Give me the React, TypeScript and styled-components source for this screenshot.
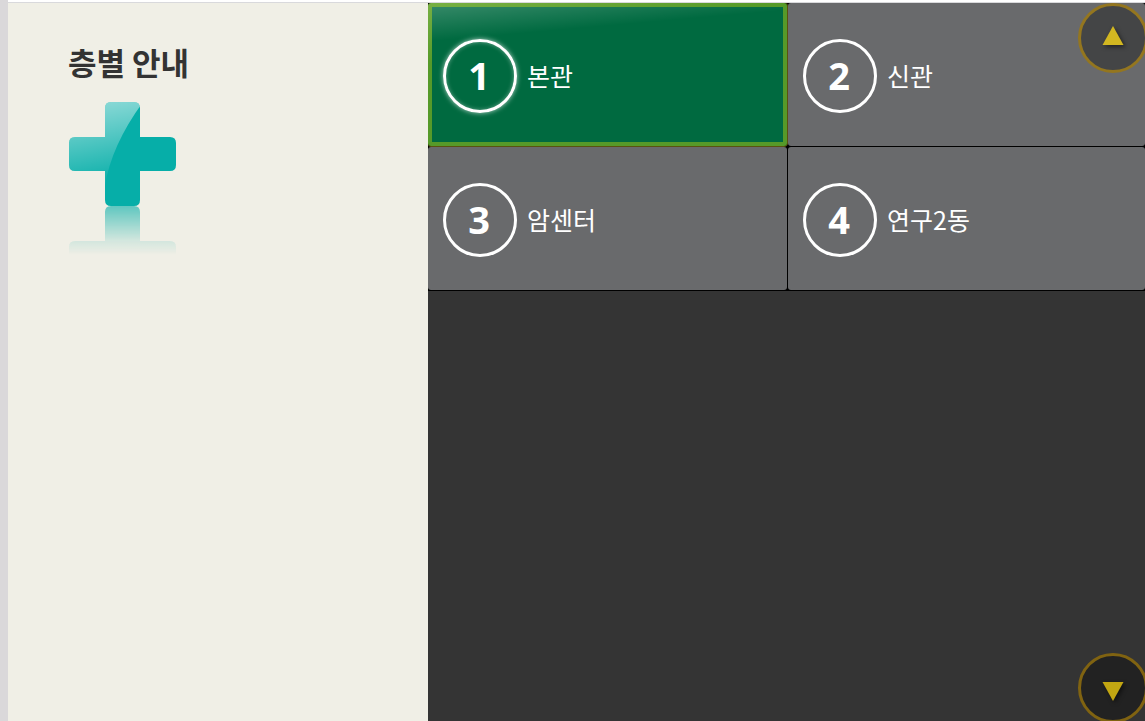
import React, { useState } from "react";
import styled, { createGlobalStyle, css } from "styled-components";

const GlobalStyle = createGlobalStyle`
  * { box-sizing: border-box; }
  body {
    margin: 0;
    overflow: hidden;
    font-family: "Noto Sans", "Noto Sans CJK KR", sans-serif;
  }
`;

const Page = styled.div`
  min-height: 100vh;
  display: flex;
  flex-direction: column;
  border-left: 8px solid #dad8da;
  background: #fff;
`;

const TopRule = styled.div`
  height: 3px;
  border-bottom: 1px solid #d9d9dc;
`;

const Columns = styled.div`
  flex: 1;
  display: flex;
`;

const Side = styled.aside`
  flex: 0 0 420px;
  padding: 35px 60px;
  background: #f0efe6;
`;

const Title = styled.h1`
  margin: 0 0 16px;
  font: bold 31px/48px "Noto Sans CJK KR", sans-serif;
  color: #333;
`;

const Cross = styled.svg`
  display: block;
  width: 109px;
  height: 156px;
`;

const Main = styled.main`
  position: relative;
  flex: 1;
  min-width: 0;
  overflow: hidden;
  background: #343434;
`;

const Grid = styled.div`
  display: grid;
  grid-template-columns: minmax(359px, 1fr) minmax(357px, 1fr);
  grid-auto-rows: 143px;
  gap: 1px;
  padding-bottom: 1px;
  background: #000;
`;

const Circle = styled.span<{ $active: boolean }>`
  flex: none;
  width: 74px;
  height: 74px;
  display: flex;
  align-items: center;
  justify-content: center;
  padding: 0 2px 2px 0;
  border: 3px solid #fff;
  border-radius: 50%;
  font-size: 38px;
  line-height: 54px;
  font-weight: bold;
  ${(p) => p.$active && css`box-shadow: 0 0 5px rgba(255, 255, 255, 0.7), inset 0 0 4px rgba(255, 255, 255, 0.4);`}
`;

const Label = styled.span`
  padding-bottom: 2px;
  font: 25px/36px "Noto Sans CJK KR", sans-serif;
`;

const Tile = styled.button<{ $active: boolean }>`
  display: flex;
  align-items: center;
  gap: 10px;
  padding: 3px 15px 0;
  border: 0;
  border-radius: 3px;
  background: #696a6c;
  color: #fff;
  font-family: inherit;
  text-align: left;
  cursor: pointer;
  ${(p) =>
    p.$active &&
    css`
      padding: 3px 11px 0;
      border: 4px solid transparent;
      background:
        linear-gradient(175deg, rgba(255, 255, 255, 0.2) 0, rgba(255, 255, 255, 0) 34px) padding-box,
        linear-gradient(#006a40, #006a40) padding-box,
        linear-gradient(170deg, #78b043 0, #569a29 60px) border-box;
      box-shadow: 0 1px 0 #5a5210, 1px 0 0 #5a5210;
    `}
`;

const Scroll = styled.button<{ $end: "top" | "bottom" }>`
  position: absolute;
  right: -3px;
  ${(p) => (p.$end === "top" ? "top: 0;" : "bottom: -2px;")}
  width: 70px;
  height: 70px;
  display: flex;
  align-items: center;
  justify-content: center;
  padding: 0;
  border: 3px solid ${(p) => (p.$end === "top" ? "#94761f" : "#806311")};
  border-radius: 50%;
  background: ${(p) => (p.$end === "top" ? "#444546" : "#222")};
  color: ${(p) => (p.$end === "top" ? "#d2b721" : "#c2a612")};
  cursor: pointer;

  svg {
    display: block;
    overflow: visible;
    filter: drop-shadow(2px 2px 2px rgba(0, 0, 0, 0.5));
  }
`;

const buildings = ["본관", "신관", "암센터", "연구2동"];

const crossPath =
  "M42 0H65Q71 0 71 6V35H101Q107 35 107 41V63Q107 69 101 69H71V98Q71 104 65 104H42Q36 104 36 98V69H6Q0 69 0 63V41Q0 35 6 35H36V6Q36 0 42 0Z";

function MedicalCross() {
  return (
    <Cross viewBox="-1 0 109 156" aria-hidden="true">
      <defs>
        <linearGradient id="gloss" gradientUnits="userSpaceOnUse" x1="30" y1="0" x2="44" y2="76">
          <stop offset="0" stopColor="#fff" stopOpacity="0.53" />
          <stop offset="1" stopColor="#fff" stopOpacity="0.04" />
        </linearGradient>
        <linearGradient id="fade" gradientUnits="userSpaceOnUse" x1="0" y1="104" x2="0" y2="153">
          <stop offset="0" stopColor="#fff" stopOpacity="0.62" />
          <stop offset="0.7" stopColor="#fff" stopOpacity="0.13" />
          <stop offset="1" stopColor="#fff" stopOpacity="0" />
        </linearGradient>
        <clipPath id="shape">
          <path d={crossPath} />
        </clipPath>
        <mask id="reflection" maskUnits="userSpaceOnUse" x="-1" y="104" width="109" height="52">
          <rect x="-1" y="104" width="109" height="52" fill="url(#fade)" />
        </mask>
      </defs>
      <path d={crossPath} fill="#06aea8" />
      <path d="M-1 0H74Q42 44 36 84H-1Z" fill="url(#gloss)" clipPath="url(#shape)" />
      <g mask="url(#reflection)">
        <path d={crossPath} fill="#06aea8" transform="matrix(1 0 0 -1 0 208)" />
      </g>
    </Cross>
  );
}

export default function App() {
  const [selected, setSelected] = useState(0);
  return (
    <>
      <GlobalStyle />
      <Page>
        <TopRule />
        <Columns>
          <Side>
            <Title>층별 안내</Title>
            <MedicalCross />
          </Side>
          <Main>
            <Grid>
              {buildings.map((name, i) => (
                <Tile
                  key={name}
                  type="button"
                  $active={i === selected}
                  aria-pressed={i === selected}
                  onClick={() => setSelected(i)}
                >
                  <Circle $active={i === selected}>{i + 1}</Circle>
                  <Label>{name}</Label>
                </Tile>
              ))}
            </Grid>
            <Scroll type="button" $end="top" aria-label="위로">
              <svg width="22" height="19" viewBox="0 0 22 19">
                <path d="M11 -3L21.500 16H0.500Z" fill="currentColor" />
              </svg>
            </Scroll>
            <Scroll type="button" $end="bottom" aria-label="아래로">
              <svg width="22" height="19" viewBox="0 0 22 19">
                <path d="M11 22L21.500 3H0.500Z" fill="currentColor" />
              </svg>
            </Scroll>
          </Main>
        </Columns>
      </Page>
    </>
  );
}
